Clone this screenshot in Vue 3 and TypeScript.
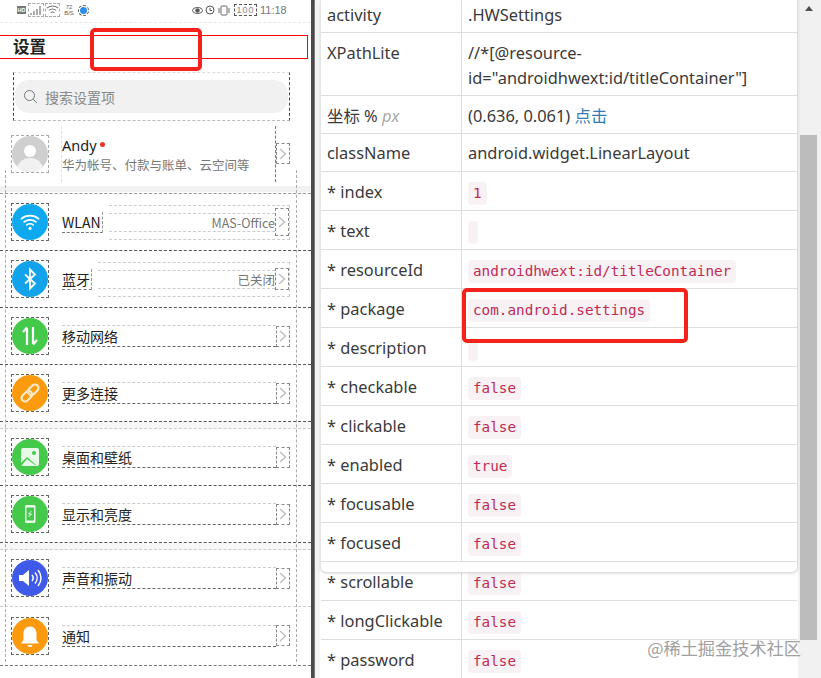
<script setup lang="ts">
interface Row { key: string; value: string }
const cardRows: Row[] = [
  { key: '* index', value: '1' },
  { key: '* text', value: '' },
  { key: '* resourceId', value: 'androidhwext:id/titleContainer' },
  { key: '* package', value: 'com.android.settings' },
  { key: '* description', value: '' },
  { key: '* checkable', value: 'false' },
  { key: '* clickable', value: 'false' },
  { key: '* enabled', value: 'true' },
  { key: '* focusable', value: 'false' },
  { key: '* focused', value: 'false' },
]
const lowerRows: Row[] = [
  { key: '* scrollable', value: 'false' },
  { key: '* longClickable', value: 'false' },
  { key: '* password', value: 'false' },
]
interface Item { label: string; icon: string; color: string; value?: string; tw: number; chevH?: number }
const groups: Item[][] = [
  [
    { label: 'WLAN', icon: 'wifi', color: '#0fa9ef', value: 'MAS-Office', tw: 40, chevH: 28 },
    { label: '蓝牙', icon: 'bt', color: '#12a3ea', value: '已关闭', tw: 29, chevH: 22 },
    { label: '移动网络', icon: 'data', color: '#45c94b', tw: 56 },
    { label: '更多连接', icon: 'link', color: '#fb9a0c', tw: 56 },
  ],
  [
    { label: '桌面和壁纸', icon: 'image', color: '#45c94b', tw: 70 },
    { label: '显示和亮度', icon: 'phone', color: '#45c94b', tw: 70 },
  ],
  [
    { label: '声音和振动', icon: 'sound', color: '#3f5ae8', tw: 70 },
    { label: '通知', icon: 'bell', color: '#fb9a0c', tw: 28 },
  ],
]
</script>

<template>
  <div class="page">
    <section class="phone">
      <div class="status">
        <div class="status-left">
          <span class="hd">HD</span>
          <svg class="si" width="14" height="12" viewBox="0 0 14 12"><path d="M2 11V9M5 11V7M8 11V5M11 11V2" stroke="#999" stroke-width="1.6" /></svg>
          <svg class="si" width="13" height="12" viewBox="0 0 14 12" fill="none" stroke="#777" stroke-width="1.1"><path d="M1 4c3.400-3 8.600-3 12 0M3 6.500c2.400-2 5.600-2 8 0M5 9c1.200-1 2.800-1 4 0" /></svg>
          <span class="speed">72<br />B/S</span>
          <span class="bluedot"></span>
        </div>
        <div class="status-right">
          <svg class="eye" width="11" height="10" viewBox="0 0 11 10" fill="none" stroke="#555" stroke-width="1"><ellipse cx="5.500" cy="5.500" rx="5" ry="3" /><circle cx="5.500" cy="5.500" r="1.800" fill="#555" /></svg>
          <svg class="alarm" width="10" height="10" viewBox="0 0 10 10" fill="none" stroke="#555" stroke-width="1"><circle cx="5" cy="5" r="4" /><path d="M5 3v2.500h2" /></svg>
          <svg class="vib" width="12" height="11" viewBox="0 0 12 11" fill="none" stroke="#666" stroke-width="1"><rect x="3" y="1" width="6" height="9" rx="1" /><path d="M1 3v5M11 3v5" /></svg>
          <span class="battery">100</span>
          <span class="time">11:18</span>
        </div>
      </div>

      <div class="titlebar"><span>设置</span></div>

      <div class="searchwrap">
        <div class="search">
          <svg width="15" height="15" viewBox="0 0 15 15" fill="none" stroke="#777" stroke-width="1"><circle cx="6.500" cy="6.500" r="5" /><path d="M10.200 10.200L14 14" /></svg>
          <span>搜索设置项</span>
        </div>
      </div>

      <div class="profile">
        <div class="avatar">
          <svg width="36" height="36" viewBox="0 0 36 36"><circle cx="18" cy="18" r="18" fill="#cfcfcf" /><circle cx="18" cy="15" r="6" fill="#fff" /><path d="M5 31c3-7 8-9 13-9s10 2 13 9c-3 3-8 5-13 5s-10-2-13-5z" fill="#f1f1f1" /></svg>
        </div>
        <div class="pinfo">
          <div class="pname"><span class="andy">Andy</span><i class="reddot"></i></div>
          <div class="psub">华为帐号、付款与账单、云空间等</div>
        </div>
        <span class="chev">
          <svg width="8" height="12" viewBox="0 0 8 12" fill="none" stroke="#bbb" stroke-width="1.300"><path d="M1 1l5.500 5L1 11" /></svg>
        </span>
      </div>

      <div v-for="(group, gi) in groups" :key="gi" class="group">
        <div v-for="item in group" :key="item.label" class="item">
          <span class="circlebox">
            <span class="circle" :style="{ background: item.color }">
              <svg v-if="item.icon === 'wifi'" width="22" height="22" viewBox="0 0 24 24" fill="none" stroke="#fff" stroke-width="1.800" stroke-linecap="round"><path d="M2.500 8.500c5.500-4.500 13.500-4.500 19 0M5.500 12c3.800-3 9.200-3 13 0M8.500 15.200c2-1.500 5-1.500 7 0" /><circle cx="12" cy="19" r="1.700" fill="#fff" stroke="none" /></svg>
              <svg v-else-if="item.icon === 'bt'" width="24" height="24" viewBox="0 0 24 24" fill="none" stroke="#fff" stroke-width="1.800"><path d="M7 7.500l10 9-5 5V2.500l5 5-10 9" /></svg>
              <svg v-else-if="item.icon === 'data'" width="24" height="24" viewBox="0 0 24 24" fill="none" stroke="#fff" stroke-width="2.200"><path d="M9 21V4M5 8l4-4.500" /><path d="M15 3v17M19 16l-4 4.500" /></svg>
              <svg v-else-if="item.icon === 'link'" width="24" height="24" viewBox="0 0 24 24" fill="none" stroke="#ffe9c8" stroke-width="2.200"><g transform="rotate(-45 12 12)"><rect x="1.500" y="8.500" width="12" height="7" rx="3.500" /><rect x="10.500" y="8.500" width="12" height="7" rx="3.500" /></g></svg>
              <svg v-else-if="item.icon === 'image'" width="24" height="24" viewBox="0 0 24 24"><rect x="3" y="3" width="18" height="18" rx="2" fill="#e8f9e8" /><circle cx="16" cy="8" r="2" fill="#45c94b" /><path d="M3 18l6-6 9 8H3z" fill="#45c94b" /><path d="M4 20l5-6 8 6z" fill="#e8f9e8" /></svg>
              <svg v-else-if="item.icon === 'phone'" width="24" height="24" viewBox="0 0 24 24" fill="none"><rect x="7" y="3" width="10.500" height="18" rx="1.500" fill="#eafaea" /><rect x="8.500" y="5.500" width="7.500" height="13" fill="#45c94b" /><path d="M13.500 9l-3 3h3l-3 3" stroke="#eafaea" stroke-width="1" /></svg>
              <svg v-else-if="item.icon === 'sound'" width="24" height="24" viewBox="0 0 24 24" fill="none" stroke="#fff" stroke-width="1.500"><path d="M1 9h4l6-5v16l-6-5H1z" fill="#fff" stroke="none" /><path d="M14 9c1.500 1.800 1.500 4.200 0 6M17 6.500c2.800 3.300 2.800 7.700 0 11M20 4c4 4.700 4 11.300 0 16" /></svg>
              <svg v-else width="24" height="24" viewBox="0 0 24 24"><path d="M12 2.500c-4 0-6.500 3-6.500 7V16L3 19.500h18L18.500 16V9.500c0-4-2.500-7-6.500-7z" fill="#fff" /><path d="M9.500 21h5a2.500 2 0 0 1-5 0z" fill="#fff" /></svg>
            </span>
          </span>
          <template v-if="item.value">
            <span class="ilabel boxed" :style="{ width: item.tw + 'px' }">{{ item.label }}</span>
            <span class="vbox">
              <span class="ivalue">{{ item.value }}</span>
              <span class="chev" :style="{ height: item.chevH + 'px' }">
                <svg width="8" height="12" viewBox="0 0 8 12" fill="none" stroke="#bbb" stroke-width="1.300"><path d="M1 1l5.500 5L1 11" /></svg>
              </span>
            </span>
          </template>
          <template v-else>
            <span class="ilabel full">{{ item.label }}</span>
            <span class="chev">
              <svg width="8" height="12" viewBox="0 0 8 12" fill="none" stroke="#bbb" stroke-width="1.300"><path d="M1 1l5.500 5L1 11" /></svg>
            </span>
          </template>
        </div>
      </div>

      <i class="vline vl-left"></i>
      <i class="vline vl-right"></i>
      <i class="mark"></i>
    </section>

    <div class="divider"></div>

    <section class="panel">
      <div class="tables">
        <div class="card">
          <div class="row first"><div class="k">activity</div><div class="v">.HWSettings</div></div>
          <div class="row tall"><div class="k">XPathLite</div><div class="v">//*[@resource-<br />id="androidhwext:id/titleContainer"]</div></div>
          <div class="row short coord"><div class="k">坐标 % <em>px</em></div><div class="v">(0.636, 0.061) <a>点击</a></div></div>
          <div class="row short"><div class="k">className</div><div class="v">android.widget.LinearLayout</div></div>
          <div v-for="r in cardRows" :key="r.key" class="row">
            <div class="k">{{ r.key }}</div>
            <div class="v"><code>{{ r.value }}</code></div>
          </div>
        </div>
        <div class="lower">
          <div v-for="r in lowerRows" :key="r.key" class="row">
            <div class="k">{{ r.key }}</div>
            <div class="v"><code>{{ r.value }}</code></div>
          </div>
        </div>
        <i class="pkgmark"></i>
      </div>
      <div class="scrollbar">
        <span class="arrow"></span>
        <span class="thumb"></span>
      </div>
      <span class="water">@稀土掘金技术社区</span>
    </section>
  </div>
</template>

<style>
html, body { margin: 0; background: #fff; }
</style>

<style scoped>
.page {
  display: flex;
  width: 821px;
  height: 678px;
  overflow: hidden;
  background: #fff;
  font-family: "Noto Sans", "Noto Sans CJK SC", sans-serif;
}
.phone {
  position: relative;
  width: 311px;
  height: 678px;
  flex: none;
  overflow: hidden;
  font-family: "Noto Sans CJK SC", "Noto Sans", sans-serif;
}
.divider {
  width: 9px;
  flex: none;
  background: linear-gradient(to right, #4a4a4a 0 3px, #777 3px 4px, #f4f4f4 4px 100%);
}
/* status bar */
.status {
  height: 22px;
  display: flex;
  justify-content: space-between;
  padding: 0 26px 0 17px;
  border-bottom: 1px dashed #e8e8e8;
}
.status-left, .status-right { display: flex; align-items: center; height: 20px; }
.si { outline: 1px dashed #aaa; margin-left: 3px; }
.hd { width: 9px; text-align: center; font: 700 5.500px/8px "Liberation Sans", sans-serif; color: #fff; background: #777; }
.speed { font: 6px/6px "Liberation Sans", sans-serif; color: #666; width: 14px; text-align: center; margin-left: 3px; }
.bluedot { width: 7px; height: 7px; border-radius: 50%; background: #2b8ee8; margin-left: 4px; outline: 1px dashed #555; outline-offset: 1px; }
.eye { margin-right: 2px; }
.alarm { margin-right: 3px; }
.vib { margin-right: 5px; }
.battery { box-sizing: border-box; width: 21px; font: 9px/10px "Liberation Sans", sans-serif; color: #888; outline: 1px dashed #555; text-align: center; letter-spacing: 1px; }
.time { width: 25px; font: 11px "Liberation Sans", sans-serif; color: #777; margin-left: 4px; }
/* title */
.titlebar {
  height: 24px;
  box-sizing: border-box;
  margin: 12px 3px 0 -2px;
  border: 1px solid #f00;
  display: flex;
  align-items: center;
  padding: 0 0 2px 14px;
  font-size: 16.500px;
  font-weight: 700;
  color: #222;
}
/* search */
.searchwrap {
  height: 49px;
  margin: 13px 21px 0 13px;
  padding: 7px 1px;
  box-sizing: border-box;
  border-left: 1px dashed #444;
  border-right: 1px dashed #444;
  border-bottom: 1px dashed #bbb;
  border-top: 1px dashed #ddd;
}
.search {
  height: 33px;
  background: #f1f1f1;
  border-radius: 14px;
  display: flex;
  align-items: center;
  gap: 7px;
  padding-left: 8px;
  font-size: 14px;
  color: #888;
}
/* profile */
.profile {
  height: 65px;
  display: flex;
  align-items: center;
  padding: 0 21px 0 12px;
  border-bottom: 6px solid #f1f1f1;
  margin-bottom: 1px;
}
.avatar { width: 36px; height: 36px; outline: 1px dashed #aaa; display: flex; margin-top: 1px; }
.pinfo { margin: 5px 0 4px 13px; flex: 1; align-self: stretch; display: flex; flex-direction: column; justify-content: center; border-left: 1px dashed #e2e2e2; border-right: 1px dashed #777; box-sizing: border-box; min-width: 0; padding-left: 1px; }
.pname { display: flex; align-items: center; height: 20px; }
.andy { font: 14.500px "Noto Sans", sans-serif; color: #222; margin-left: -1px; }
.reddot { width: 5px; height: 5px; border-radius: 50%; background: #e8362c; margin-left: 3px; }
.psub { font-size: 12.500px; line-height: 19px; color: #777; white-space: nowrap; margin-left: -1px; }
/* rows */
.group {
  background: #f7f7f7;
  border-bottom: 1px dashed #ccc;
  border-top: 1px dashed #999;
  padding-bottom: 6px;
}
.group + .group { border-top: none; }
.group:last-of-type { padding-bottom: 1px; border-bottom: 1px dashed #777; background: #fff; }
.item {
  height: 57px;
  box-sizing: border-box;
  display: flex;
  align-items: center;
  padding: 0 21px 0 12px;
  background: #fff;
  border-bottom: 1px dashed #555;
}
.group:last-of-type .item:first-child { border-bottom: 1px dashed #ccc; }
.group:last-of-type .item:last-child { border-bottom: none; }
.circlebox {
  width: 36px;
  height: 36px;
  flex: none;
  outline: 1px dashed #666;
}
.circle {
  width: 36px;
  height: 36px;
  border-radius: 50%;
  display: flex;
  align-items: center;
  justify-content: center;
}
.ilabel { margin-left: 14px; font-size: 14px; line-height: 20px; color: #222; white-space: nowrap; flex: none; }
.boxed { border-bottom: 1px dashed #777; border-right: 1px dashed #999; }
.full {
  flex: 1;
  box-sizing: border-box;
  border-top: 1px dashed #ccc;
  border-bottom: 1px dashed #666;
}
.vbox {
  flex: 1;
  min-width: 0;
  margin-left: 6px;
  height: 33px;
  display: flex;
  align-items: center;
  border-top: 1px dashed #ccc;
  border-bottom: 1px dashed #ccc;
  border-right: 1px dashed #ccc;
}
.ivalue {
  flex: 1;
  text-align: right;
  font-size: 12.500px;
  color: #777;
  line-height: 17px;
  border-top: 1px dashed #ccc;
  border-bottom: 1px dashed #ccc;
  white-space: nowrap;
}
.chev {
  width: 14px;
  height: 21px;
  box-sizing: border-box;
  border: 1px dashed #888;
  display: flex;
  align-items: center;
  justify-content: center;
  flex: none;
}
.vline { position: absolute; width: 0; border-left: 1px dashed #aaa; }
.vl-left { left: 5px; top: 170px; height: 492px; }
.vl-right { left: 296px; top: 170px; height: 492px; }
.mark {
  position: absolute;
  left: 90px;
  top: 28px;
  width: 112px;
  height: 43px;
  box-sizing: border-box;
  border: 4px solid #f5221b;
  border-radius: 5px;
}
/* panel */
.panel {
  position: relative;
  flex: 1;
  display: flex;
  min-width: 0;
  font-family: "Noto Sans", "Noto Sans CJK SC", sans-serif;
  font-size: 16.400px;
  color: #3a3a3a;
}
.tables { position: relative; flex: 1; min-width: 0; }
.card {
  position: relative;
  z-index: 1;
  height: 573px;
  box-sizing: border-box;
  overflow: hidden;
  background: #fff;
  border-left: 1px solid #e4e4e4;
  border-right: 1px solid #ddd;
  border-bottom: 1px solid #ddd;
  border-radius: 0 0 6px 6px;
  box-shadow: 0 1px 3px rgba(0, 0, 0, 0.1);
}
.lower { margin: -11px 1px 0; }
.row {
  display: flex;
  height: 39px;
  box-sizing: border-box;
  border-bottom: 1px solid #ddd;
  line-height: 25px;
}
.first { height: 33px; }
.tall { height: 63px; }
.short { height: 38px; }
.k {
  width: 141px;
  flex: none;
  box-sizing: border-box;
  padding: 7px 0 0 6px;
  border-right: 1px solid #ddd;
  white-space: nowrap;
}
.first .k, .first .v { padding-top: 2px; }
.short .k, .short .v { padding-top: 6px; }
.coord .k, .coord .v { padding-top: 7px; }
.k em { color: #aaa; }
.v { flex: 1; padding: 7px 0 0 6px; white-space: nowrap; }
.v a { color: #337ab7; }
code {
  display: inline-block;
  height: 23px;
  margin-top: 3px;
  padding: 0 5px;
  font: 14.300px/23px "DejaVu Sans Mono", monospace;
  color: #c02a55;
  background: #f9f2f4;
  border-radius: 4px;
  vertical-align: top;
}
.pkgmark {
  position: absolute;
  left: 142px;
  top: 288px;
  width: 226px;
  height: 55px;
  box-sizing: border-box;
  border: 4px solid #f5221b;
  border-radius: 5px;
  z-index: 2;
}
.scrollbar {
  width: 23px;
  flex: none;
  height: 678px;
  box-sizing: border-box;
  background: #f1f1f1;
  padding: 0 4px 0 2px;
  display: flex;
  flex-direction: column;
}
.arrow {
  width: 0;
  height: 0;
  margin: 6px auto 0;
  border: 4px solid transparent;
  border-top: 0;
  border-bottom: 5px solid #505050;
}
.thumb { margin-top: 124px; height: 505px; background: #bcbcbc; }
.water {
  position: absolute;
  right: 20px;
  top: 637px;
  font-size: 17.200px;
  line-height: 22px;
  color: #a0a0a0;
  z-index: 3;
  font-family: "Noto Sans CJK SC", sans-serif;
}
</style>
